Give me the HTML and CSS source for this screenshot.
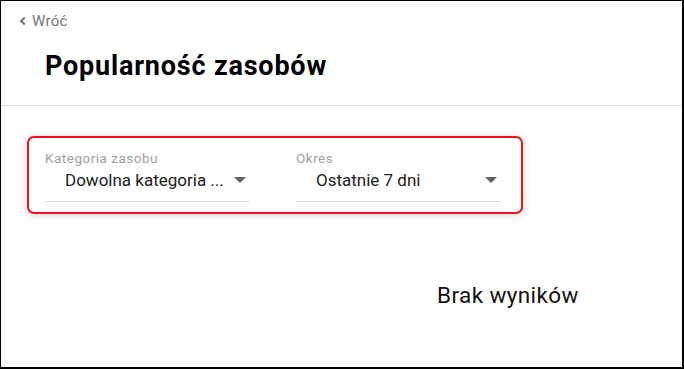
FILE: index.html
```html
<!DOCTYPE html>
<html lang="pl">
<head>
	<meta charset="utf-8">
	<title>Popularność zasobów</title>
	<link rel="stylesheet" href="styles.css">
</head>
<body>
<div class="frame">
	<div class="head">
		<a class="back" href="#"><span class="back_icon"></span>Wróć</a>
		<h1 class="title">Popularność zasobów</h1>
	</div>
	<div class="filters">
		<div class="field">
			<span class="field_label">Kategoria zasobu</span>
			<div class="field_value">Dowolna kategoria ...<span class="arrow"></span></div>
		</div>
		<div class="field">
			<span class="field_label">Okres</span>
			<div class="field_value">Ostatnie 7 dni<span class="arrow"></span></div>
		</div>
	</div>
	<p class="empty">Brak wyników</p>
</div>
</body>
</html>
```

FILE: styles.css
```css
*	{margin:0;padding:0;box-sizing:border-box;}
body	{font-family:Roboto, "Liberation Sans", sans-serif;color:#212121;background:#fff;}
.frame	{width:684px;height:369px;border:1px solid #000;border-right-width:2px;border-bottom-width:2px;overflow:hidden;}
.head	{height:105px;padding:12px 0 0;border-bottom:1px solid #d8dde4;}
.back	{display:flex;align-items:center;padding-left:20px;font-size:15px;letter-spacing:0.3px;color:#757575;text-decoration:none;line-height:16px;}
.back_icon	{width:6px;height:6px;margin-right:5px;border-left:2px solid #757575;border-bottom:2px solid #757575;transform:rotate(45deg);}
.title	{margin:20px 0 0 44px;font-size:27px;letter-spacing:0.8px;font-weight:bold;color:#000;line-height:34px;}
.filters	{display:inline-flex;gap:46px;margin:30px 0 0 26px;padding:12px 20px 10px 16px;border:2px solid #f0131e;border-radius:7px;box-shadow:0 1px 8px rgba(0,0,0,0.18);}
.field	{width:205px;border-bottom:1px solid #d6d9dd;padding-bottom:11px;}
.field_label	{display:block;font-size:13.5px;letter-spacing:0.5px;color:#9e9e9e;line-height:16px;}
.field_value	{display:flex;justify-content:space-between;align-items:center;margin-top:4px;padding:0 4px 0 20px;font-size:17px;line-height:20px;color:#212121;}
.arrow	{width:0;height:0;border-left:6px solid transparent;border-right:6px solid transparent;border-top:6px solid #616161;}
.empty	{margin:68px 0 0 436px;font-size:22.5px;letter-spacing:0.4px;color:#111;line-height:26px;}
```
